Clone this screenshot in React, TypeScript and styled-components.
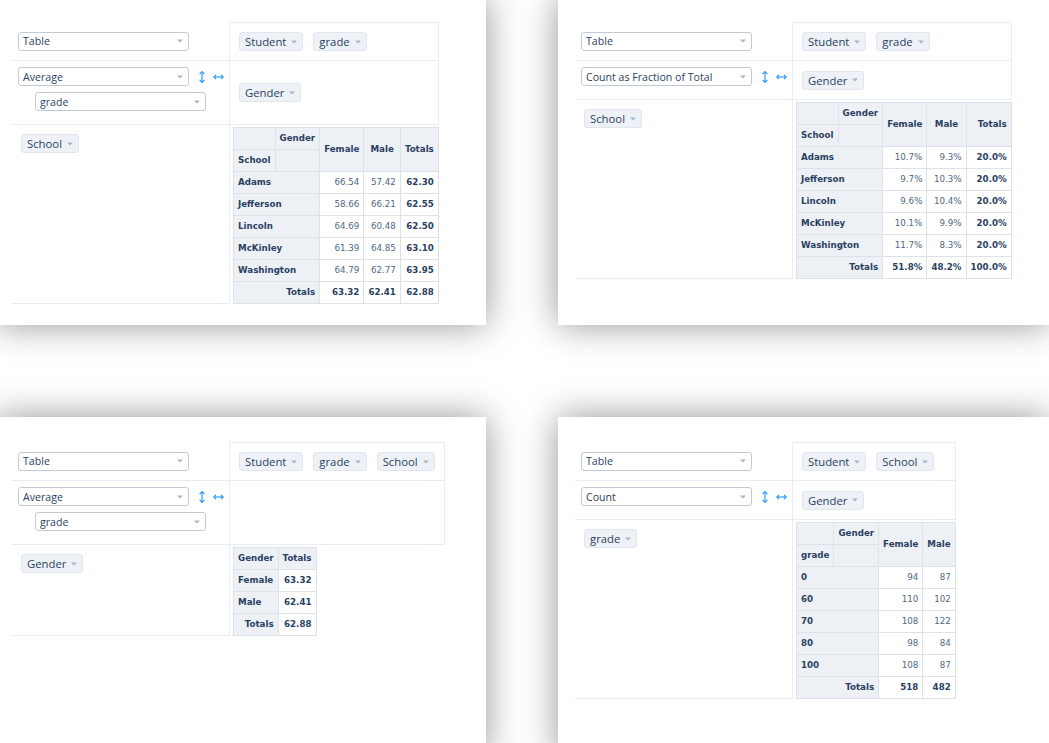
import React from "react";
import styled, { createGlobalStyle } from "styled-components";

const Global = createGlobalStyle`
  html, body { margin: 0; padding: 0; background: #ffffff; overflow: hidden; }
  body { width: 1049px; height: 743px; }
  #root { width: 1049px; height: 743px; overflow: hidden; }
`;

const LINE = "#e8edf3";
const CELL_BORDER = "#dbe2ea";
const HEAD_BG = "#edf1f6";
const INK = "#2a3f5f";

const Page = styled.div`
  display: grid;
  grid-template-columns: 491px 491px;
  grid-template-rows: 328px 340px;
  column-gap: 72px;
  row-gap: 92px;
  margin: -3px 0 0 -5px;
`;

const Card = styled.section`
  background: #ffffff;
  box-shadow: 0 0 34px rgba(0, 0, 0, 0.42);
  padding: 25px 0 0 17px;
  box-sizing: border-box;
  display: flex;
  align-items: flex-start;
`;

const PivotGrid = styled.div`
  display: grid;
  grid-template-columns: 217px max-content;
  color: ${INK};
`;

const RendererCell = styled.div`
  display: flex;
  align-items: center;
  padding: 0 6px;
  border-bottom: 1px solid ${LINE};
`;

const UnusedCell = styled.div`
  display: flex;
  align-items: center;
  gap: 10px;
  padding: 9px;
  border: 1px solid ${LINE};
`;

const ValsCell = styled.div`
  display: flex;
  flex-direction: column;
  gap: 6px;
  padding: 6px 0 13px 6px;
  border-bottom: 1px solid ${LINE};
`;

const ValsRow = styled.div<{ $indent?: boolean }>`
  display: flex;
  align-items: center;
  padding-left: ${(p) => (p.$indent ? "17px" : "0")};
`;

const ColsCell = styled.div`
  display: flex;
  align-items: center;
  gap: 10px;
  padding: 0 9px;
  border-left: 1px solid ${LINE};
  border-right: 1px solid ${LINE};
  border-bottom: 1px solid ${LINE};
`;

const RowsCell = styled.div`
  padding: 9px;
  border-bottom: 1px solid ${LINE};
`;

const OutputCell = styled.div`
  padding: 2px 0 0 3px;
  border-left: 1px solid ${LINE};
`;

const Select = styled.div`
  width: 171px;
  height: 19px;
  box-sizing: border-box;
  border: 1px solid #c2cad5;
  border-radius: 3px;
  background: #ffffff;
  display: flex;
  align-items: center;
  justify-content: space-between;
  padding: 0 5px 0 4px;
  font-family: "Open Sans", "Liberation Sans", sans-serif;
  font-size: 10.6px;
  color: ${INK};
  white-space: nowrap;
`;

const Chip = styled.span`
  display: inline-flex;
  align-items: center;
  gap: 5px;
  height: 19px;
  box-sizing: border-box;
  padding: 0 5px;
  background: #eef2f7;
  border: 1px solid #e0e6ee;
  border-radius: 3px;
  font-family: "Open Sans", "Liberation Sans", sans-serif;
  font-size: 11.3px;
  color: ${INK};
  white-space: nowrap;
`;

const OrderButton = styled.span`
  display: inline-flex;
  justify-content: center;
  align-items: center;
  width: 16px;
  height: 19px;
  color: #1f93ff;
`;

const FirstOrder = styled(OrderButton)`
  margin-left: 5px;
`;

const Caret = () => (
  <svg width="6" height="4" viewBox="0 0 6 4" aria-hidden="true">
    <path d="M0 0.5 L6 0.5 L3 3.5 Z" fill="#a9b6c6" />
  </svg>
);

const VArrow = () => (
  <svg width="6" height="12" viewBox="0 0 6 12" aria-hidden="true">
    <path d="M3 1.5 V10.5" stroke="#1f93ff" strokeWidth="1.1" />
    <path d="M0.6 3.2 L3 0.6 L5.4 3.2" fill="none" stroke="#1f93ff" strokeWidth="1.1" />
    <path d="M0.6 8.8 L3 11.4 L5.4 8.8" fill="none" stroke="#1f93ff" strokeWidth="1.1" />
  </svg>
);

const HArrow = () => (
  <svg width="11" height="6" viewBox="0 0 11 6" aria-hidden="true">
    <path d="M1.2 3 H9.8" stroke="#1f93ff" strokeWidth="1.1" />
    <path d="M3 0.8 L0.8 3 L3 5.2" fill="none" stroke="#1f93ff" strokeWidth="1.1" />
    <path d="M8 0.8 L10.2 3 L8 5.2" fill="none" stroke="#1f93ff" strokeWidth="1.1" />
  </svg>
);

const PvtTable = styled.table`
  border-collapse: collapse;
  font-family: "DejaVu Sans", Verdana, sans-serif;
  font-size: 8.7px;
  line-height: 13px;
  color: ${INK};
`;

const Th = styled.th<{ $align?: "left" | "center" | "right" }>`
  background: ${HEAD_BG};
  border: 1px solid ${CELL_BORDER};
  padding: 4px;
  font-weight: bold;
  text-align: ${(p) => p.$align ?? "left"};
  vertical-align: middle;
  white-space: nowrap;
`;

const Td = styled.td<{ $bold?: boolean }>`
  background: #ffffff;
  border: 1px solid ${CELL_BORDER};
  padding: 4px;
  text-align: right;
  white-space: nowrap;
  font-weight: ${(p) => (p.$bold ? "bold" : "normal")};
  color: ${(p) => (p.$bold ? INK : "#506784")};
`;

type Row = { label: string; values: string[]; total?: string };

type TableData = {
  rowAttr: string;
  colAttr?: string;
  colKeys: string[];
  rows: Row[];
  totals: string[];
  grand?: string;
  showTotalsCol: boolean;
};

const PivotTable = ({ d }: { d: TableData }) => {
  if (!d.colAttr) {
    return (
      <PvtTable>
        <thead>
          <tr>
            <Th>{d.rowAttr}</Th>
            <Th $align="right">Totals</Th>
          </tr>
        </thead>
        <tbody>
          {d.rows.map((r) => (
            <tr key={r.label}>
              <Th>{r.label}</Th>
              <Td $bold>{r.total}</Td>
            </tr>
          ))}
          <tr>
            <Th $align="right">Totals</Th>
            <Td $bold>{d.grand}</Td>
          </tr>
        </tbody>
      </PvtTable>
    );
  }
  return (
    <PvtTable>
      <thead>
        <tr>
          <Th />
          <Th>{d.colAttr}</Th>
          {d.colKeys.map((k) => (
            <Th key={k} $align="center" rowSpan={2}>
              {k}
            </Th>
          ))}
          {d.showTotalsCol && (
            <Th $align="right" rowSpan={2}>
              Totals
            </Th>
          )}
        </tr>
        <tr>
          <Th>{d.rowAttr}</Th>
          <Th />
        </tr>
      </thead>
      <tbody>
        {d.rows.map((r) => (
          <tr key={r.label}>
            <Th colSpan={2}>{r.label}</Th>
            {r.values.map((v, i) => (
              <Td key={i}>{v}</Td>
            ))}
            {d.showTotalsCol && <Td $bold>{r.total}</Td>}
          </tr>
        ))}
        <tr>
          <Th colSpan={2} $align="right">
            Totals
          </Th>
          {d.totals.map((v, i) => (
            <Td key={i} $bold>
              {v}
            </Td>
          ))}
          {d.showTotalsCol && <Td $bold>{d.grand}</Td>}
        </tr>
      </tbody>
    </PvtTable>
  );
};

type PanelData = {
  aggregator: string;
  vals: string[];
  unused: string[];
  cols: string[];
  rowsAxis: string[];
  table: TableData;
};

const Dropdown = ({ value }: { value: string }) => (
  <Select>
    <span>{value}</span>
    <Caret />
  </Select>
);

const AttrChip = ({ name }: { name: string }) => (
  <Chip>
    {name}
    <Caret />
  </Chip>
);

const Panel = ({ p }: { p: PanelData }) => (
  <Card>
    <PivotGrid>
      <RendererCell>
        <Dropdown value="Table" />
      </RendererCell>
      <UnusedCell>
        {p.unused.map((u) => (
          <AttrChip key={u} name={u} />
        ))}
      </UnusedCell>
      <ValsCell>
        <ValsRow>
          <Dropdown value={p.aggregator} />
          <FirstOrder>
            <VArrow />
          </FirstOrder>
          <OrderButton>
            <HArrow />
          </OrderButton>
        </ValsRow>
        {p.vals.map((v) => (
          <ValsRow key={v} $indent>
            <Dropdown value={v} />
          </ValsRow>
        ))}
      </ValsCell>
      <ColsCell>
        {p.cols.map((c) => (
          <AttrChip key={c} name={c} />
        ))}
      </ColsCell>
      <RowsCell>
        {p.rowsAxis.map((r) => (
          <AttrChip key={r} name={r} />
        ))}
      </RowsCell>
      <OutputCell>
        <PivotTable d={p.table} />
      </OutputCell>
    </PivotGrid>
  </Card>
);

const panels: PanelData[] = [
  {
    aggregator: "Average",
    vals: ["grade"],
    unused: ["Student", "grade"],
    cols: ["Gender"],
    rowsAxis: ["School"],
    table: {
      rowAttr: "School",
      colAttr: "Gender",
      colKeys: ["Female", "Male"],
      showTotalsCol: true,
      rows: [
        { label: "Adams", values: ["66.54", "57.42"], total: "62.30" },
        { label: "Jefferson", values: ["58.66", "66.21"], total: "62.55" },
        { label: "Lincoln", values: ["64.69", "60.48"], total: "62.50" },
        { label: "McKinley", values: ["61.39", "64.85"], total: "63.10" },
        { label: "Washington", values: ["64.79", "62.77"], total: "63.95" },
      ],
      totals: ["63.32", "62.41"],
      grand: "62.88",
    },
  },
  {
    aggregator: "Count as Fraction of Total",
    vals: [],
    unused: ["Student", "grade"],
    cols: ["Gender"],
    rowsAxis: ["School"],
    table: {
      rowAttr: "School",
      colAttr: "Gender",
      colKeys: ["Female", "Male"],
      showTotalsCol: true,
      rows: [
        { label: "Adams", values: ["10.7%", "9.3%"], total: "20.0%" },
        { label: "Jefferson", values: ["9.7%", "10.3%"], total: "20.0%" },
        { label: "Lincoln", values: ["9.6%", "10.4%"], total: "20.0%" },
        { label: "McKinley", values: ["10.1%", "9.9%"], total: "20.0%" },
        { label: "Washington", values: ["11.7%", "8.3%"], total: "20.0%" },
      ],
      totals: ["51.8%", "48.2%"],
      grand: "100.0%",
    },
  },
  {
    aggregator: "Average",
    vals: ["grade"],
    unused: ["Student", "grade", "School"],
    cols: [],
    rowsAxis: ["Gender"],
    table: {
      rowAttr: "Gender",
      colKeys: [],
      showTotalsCol: true,
      rows: [
        { label: "Female", values: [], total: "63.32" },
        { label: "Male", values: [], total: "62.41" },
      ],
      totals: [],
      grand: "62.88",
    },
  },
  {
    aggregator: "Count",
    vals: [],
    unused: ["Student", "School"],
    cols: ["Gender"],
    rowsAxis: ["grade"],
    table: {
      rowAttr: "grade",
      colAttr: "Gender",
      colKeys: ["Female", "Male"],
      showTotalsCol: false,
      rows: [
        { label: "0", values: ["94", "87"] },
        { label: "60", values: ["110", "102"] },
        { label: "70", values: ["108", "122"] },
        { label: "80", values: ["98", "84"] },
        { label: "100", values: ["108", "87"] },
      ],
      totals: ["518", "482"],
    },
  },
];

export default function App() {
  return (
    <>
      <Global />
      <Page>
        {panels.map((p, i) => (
          <Panel key={i} p={p} />
        ))}
      </Page>
    </>
  );
}
